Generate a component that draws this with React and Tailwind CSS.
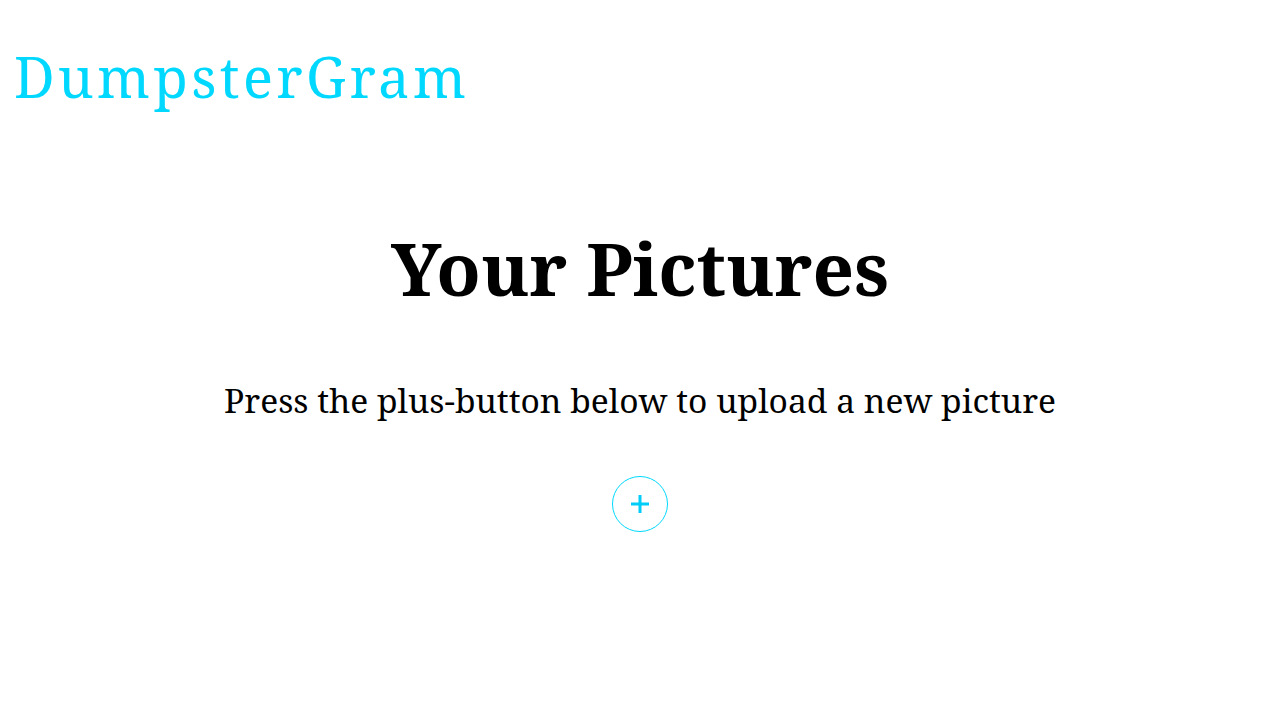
import React from "react";

export default function App() {
  return (
    <div className="min-h-screen bg-white text-black" style={{ fontFamily: '"Noto Serif", "DejaVu Serif", serif' }}>
      <header className="px-[14px] pt-[44px]">
        <h1 className="text-[56px] leading-[64px] tracking-[3.4px] text-[#00d8ff]">DumpsterGram</h1>
      </header>
      <main className="flex flex-col items-center">
        <h2 className="mt-[118px] text-[72.7px] leading-[84px] font-bold">Your Pictures</h2>
        <p className="mt-[70px] text-[33.6px] leading-[40px]">Press the plus-button below to upload a new picture</p>
        <button className="mt-[56px] w-[56px] h-[56px] rounded-full border border-[#00d8ff] flex items-center justify-center">
          <svg width="18" height="18" viewBox="0 0 18 18">
            <path d="M9 0v18M0 9h18" stroke="#00ccf8" strokeWidth="3" />
          </svg>
        </button>
      </main>
    </div>
  );
}
